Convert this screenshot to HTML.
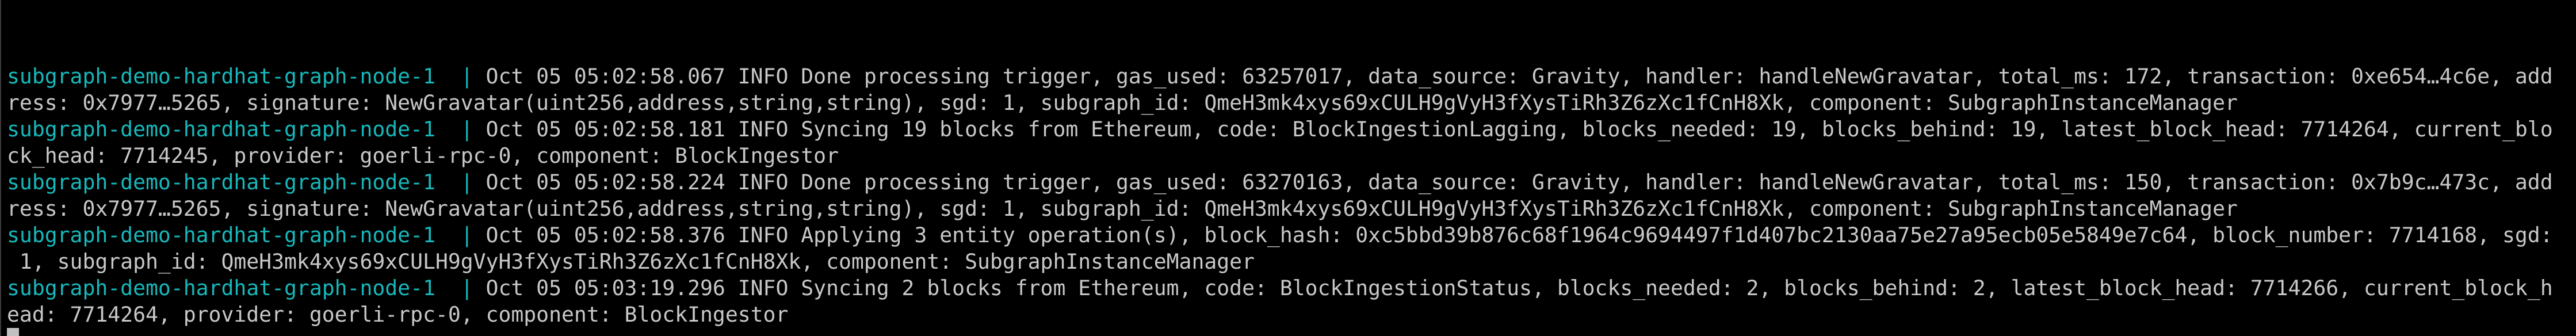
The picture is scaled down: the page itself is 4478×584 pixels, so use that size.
<!DOCTYPE html>
<html><head><meta charset="utf-8"><style>
html,body{margin:0;padding:0;background:#000;width:4478px;height:584px;overflow:hidden;}
body{position:relative;}
.b{position:absolute;left:0;top:0;width:2px;height:584px;background:#3a3a3a;}
.t{position:absolute;left:12px;top:110px;font-family:"DejaVu Sans Mono","Liberation Mono",monospace;font-size:36.4px;line-height:46px;color:#c8c8c8;white-space:pre;}
.c{color:#17b8bb;}
.cur{position:absolute;left:12px;top:570px;width:21px;height:14px;background:#c0c0c0;}
</style></head><body>
<div class="b"></div>
<div class="t"><div><span class="c">subgraph-demo-hardhat-graph-node-1  | </span>Oct 05 05:02:58.067 INFO Done processing trigger, gas_used: 63257017, data_source: Gravity, handler: handleNewGravatar, total_ms: 172, transaction: 0xe654…4c6e, add</div><div>ress: 0x7977…5265, signature: NewGravatar(uint256,address,string,string), sgd: 1, subgraph_id: QmeH3mk4xys69xCULH9gVyH3fXysTiRh3Z6zXc1fCnH8Xk, component: SubgraphInstanceManager</div><div><span class="c">subgraph-demo-hardhat-graph-node-1  | </span>Oct 05 05:02:58.181 INFO Syncing 19 blocks from Ethereum, code: BlockIngestionLagging, blocks_needed: 19, blocks_behind: 19, latest_block_head: 7714264, current_blo</div><div>ck_head: 7714245, provider: goerli-rpc-0, component: BlockIngestor</div><div><span class="c">subgraph-demo-hardhat-graph-node-1  | </span>Oct 05 05:02:58.224 INFO Done processing trigger, gas_used: 63270163, data_source: Gravity, handler: handleNewGravatar, total_ms: 150, transaction: 0x7b9c…473c, add</div><div>ress: 0x7977…5265, signature: NewGravatar(uint256,address,string,string), sgd: 1, subgraph_id: QmeH3mk4xys69xCULH9gVyH3fXysTiRh3Z6zXc1fCnH8Xk, component: SubgraphInstanceManager</div><div><span class="c">subgraph-demo-hardhat-graph-node-1  | </span>Oct 05 05:02:58.376 INFO Applying 3 entity operation(s), block_hash: 0xc5bbd39b876c68f1964c9694497f1d407bc2130aa75e27a95ecb05e5849e7c64, block_number: 7714168, sgd:</div><div> 1, subgraph_id: QmeH3mk4xys69xCULH9gVyH3fXysTiRh3Z6zXc1fCnH8Xk, component: SubgraphInstanceManager</div><div><span class="c">subgraph-demo-hardhat-graph-node-1  | </span>Oct 05 05:03:19.296 INFO Syncing 2 blocks from Ethereum, code: BlockIngestionStatus, blocks_needed: 2, blocks_behind: 2, latest_block_head: 7714266, current_block_h</div><div>ead: 7714264, provider: goerli-rpc-0, component: BlockIngestor</div></div>
<div class="cur"></div>
</body></html>
